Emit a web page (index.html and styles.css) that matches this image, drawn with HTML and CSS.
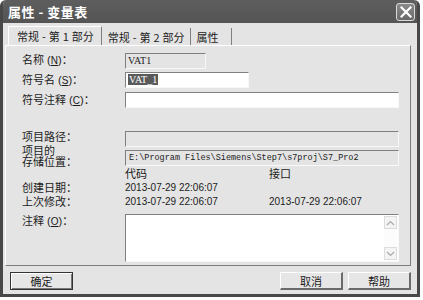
FILE: index.html
```html
<!DOCTYPE html>
<html lang="zh">
  <head>
    <meta charset="UTF-8" />
    <title>属性 - 变量表</title>
    <link rel="stylesheet" href="styles.css">
  </head>
  <body>
    <div class="window">
      <div class="titlebar">
        <span class="title">属性 - 变量表</span>
        <button class="close-btn">
          <svg width="12" height="12" viewBox="0 0 12 12"><path d="M1.5 1.5 L10.5 10.5 M10.5 1.5 L1.5 10.5" stroke="#fff" stroke-width="2.2" stroke-linecap="square"/></svg>
        </button>
      </div>

      <div class="content">
        <div class="tabs">
          <div class="tab active">常规 - 第 1 部分</div>
          <div class="tab">常规 - 第 2 部分</div>
          <div class="tab last">属性</div>
        </div>

        <div class="panel">
          <div class="row r-name">
            <div class="label">名称 (<u>N</u>)：</div>
            <div class="field disabled short">VAT1</div>
          </div>
          <div class="row r-sym">
            <div class="label">符号名 (<u>S</u>)：</div>
            <div class="field mid"><span class="selected">VAT_1</span></div>
          </div>
          <div class="row r-comment">
            <div class="label">符号注释 (<u>C</u>)：</div>
            <div class="field wide"></div>
          </div>
          <div class="row r-path">
            <div class="label up">项目路径：</div>
            <div class="field disabled wide"></div>
          </div>
          <div class="row r-store">
            <div class="label two-line">项目的<br>存储位置：</div>
            <div class="field disabled wide path">E:\Program Files\Siemens\Step7\s7proj\S7_Pro2</div>
          </div>
          <div class="row r-head">
            <div class="label"></div>
            <div class="col">代码</div>
            <div class="col">接口</div>
          </div>
          <div class="row r-date">
            <div class="label">创建日期：</div>
            <div class="col date">2013-07-29 22:06:07</div>
            <div class="col date"></div>
          </div>
          <div class="row r-date">
            <div class="label">上次修改：</div>
            <div class="col date">2013-07-29 22:06:07</div>
            <div class="col date">2013-07-29 22:06:07</div>
          </div>
          <div class="row r-note">
            <div class="label">注释 (<u>O</u>)：</div>
            <div class="field wide memo">
              <div class="scrollbar">
                <div class="arrow up"><svg width="9" height="6" viewBox="0 0 9 6"><path d="M1 5 L4.5 1.5 L8 5" fill="none" stroke="#aaa" stroke-width="1.2"/></svg></div>
                <div class="track"></div>
                <div class="arrow down"><svg width="9" height="6" viewBox="0 0 9 6"><path d="M1 1 L4.5 4.5 L8 1" fill="none" stroke="#aaa" stroke-width="1.2"/></svg></div>
              </div>
            </div>
          </div>
        </div>

        <div class="buttons">
          <button class="btn default">确定</button>
          <div class="spacer"></div>
          <button class="btn">取消</button>
          <button class="btn">帮助</button>
        </div>
      </div>
    </div>
  </body>
</html>
```

FILE: styles.css
```css
body {
  margin: 0;
  padding: 0;
  background: #fff;
  font-family: "Liberation Sans", "Noto Sans CJK SC", sans-serif;
  font-size: 11px;
  color: #1c1c1c;
}
.window {
  width: 420px;
  height: 297px;
  box-sizing: border-box;
  display: flex;
  flex-direction: column;
  background: #e4e4e4;
  border: 3px solid #484848;
  border-top: none;
  border-radius: 6px 6px 0 0;
  overflow: hidden;
}
.titlebar {
  height: 23px;
  flex: none;
  display: flex;
  align-items: center;
  justify-content: space-between;
  background: linear-gradient(#5e5e5e, #545454);
  color: #fff;
  margin: 0 -3px;
  padding: 0 1px 0 8px;
}
.title {
  font-family: "Noto Sans CJK SC", sans-serif;
  font-weight: bold;
  font-size: 13px;
  letter-spacing: 0.5px;
}
.close-btn {
  width: 19px;
  height: 18px;
  margin: 1px 4px 0 0;
  padding: 0;
  display: flex;
  align-items: center;
  justify-content: center;
  background: linear-gradient(#8a8a8a, #6a6a6a);
  border: 1px solid #d8d8d8;
  border-radius: 3px;
}
.content {
  flex: 1;
  display: flex;
  flex-direction: column;
  padding: 3px 6px 0 2px;
}
.tabs {
  display: flex;
  height: 19px;
  padding-left: 3px;
  font-family: "Noto Sans CJK SC", sans-serif;
  font-size: 11px;
  word-spacing: 0.5px;
}
.tab {
  padding: 0 5px;
  display: flex;
  align-items: center;
  border-right: 1px solid #808080;
  margin-right: 1px;
  height: 17px;
  margin-top: 2px;
}
.tab.active {
  height: 19px;
  margin-top: 0;
  padding: 0 7px 0 8px;
  border-left: 1px solid #fff;
  border-top: 1px solid #fff;
  box-sizing: border-box;
}
.tab.last {
  padding-right: 12px;
}
.panel {
  height: 221px;
  box-sizing: border-box;
  border-top: 1px solid #fff;
  border-left: 1px solid #fff;
  border-right: 1px solid #7c7c7c;
  border-bottom: 1px solid #7c7c7c;
  padding: 6px 10px 0 16px;
  display: flex;
  flex-direction: column;
}
.row {
  display: flex;
  align-items: center;
  line-height: 13px;
}
.label {
  width: 103px;
  flex: none;
  font-size: 11px;
  line-height: 13px;
}
.label u {
  font-size: 10px;
}
.label.up {
  margin-top: -3px;
}
.field {
  height: 16px;
  box-sizing: border-box;
  background: #fff;
  border-top: 1px solid #808080;
  border-left: 1px solid #808080;
  border-right: 1px solid #f8f8f8;
  border-bottom: 1px solid #f8f8f8;
  font-family: "Liberation Serif", serif;
  font-size: 10px;
  line-height: 14px;
  padding-left: 2px;
  position: relative;
}
.field.disabled {
  background: #e4e4e4;
}
.short { width: 81px; }
.mid { width: 124px; }
.wide { width: 274px; }
.selected {
  background: #5a5a5a;
  color: #fff;
  padding: 0 1px;
}
.path {
  font-family: "Liberation Mono", monospace;
  font-size: 8.5px;
  padding-left: 3px;
}
.r-name { height: 17px; }
.r-sym { height: 16px; margin-top: 3px; }
.r-comment { height: 16px; margin-top: 4px; }
.r-path { height: 16px; margin-top: 23px; }
.r-store { height: 16px; margin-top: 3px; }
.label.two-line {
  line-height: 11px;
  margin-top: -2px;
}
.r-head { height: 14px; margin-top: 1px; }
.r-date { height: 14px; }
.col {
  width: 144px;
  flex: none;
  line-height: 12px;
}
.date {
  font-size: 10px;
}
.r-note {
  align-items: flex-start;
  margin-top: 5px;
}
.r-note .label {
  margin-top: 1px;
}
.memo {
  height: 48px;
}
.scrollbar {
  position: absolute;
  top: 1px;
  right: 1px;
  bottom: 1px;
  width: 13px;
  display: flex;
  flex-direction: column;
  background: #fcfcfc;
}
.arrow {
  height: 13px;
  display: flex;
  align-items: center;
  justify-content: center;
  border: 1px solid #dcdcdc;
  box-sizing: border-box;
  background: #f4f4f4;
}
.track {
  flex: 1;
}
.buttons {
  display: flex;
  align-items: center;
  padding: 6px 0 0 5px;
  gap: 5px;
}
.spacer {
  flex: 1;
}
.btn {
  width: 63px;
  height: 18px;
  padding: 0;
  font-family: "Noto Sans CJK SC", sans-serif;
  font-size: 11px;
  color: #1c1c1c;
  background: #e6e6e6;
  border-top: 1px solid #fff;
  border-left: 1px solid #fff;
  border-right: 2px solid #6a6a6a;
  border-bottom: 2px solid #6a6a6a;
}
.btn.default {
  border: 1px solid #333;
  box-shadow: inset 1px 1px 0 #fff, inset -1px -1px 0 #777;
}
```
